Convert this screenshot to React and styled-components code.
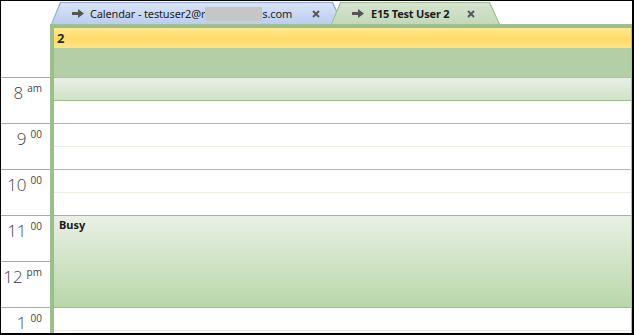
import React from "react";
import styled, { createGlobalStyle } from "styled-components";

const Global = createGlobalStyle`
  html, body { margin: 0; padding: 0; background: #fff; }
  body { font-family: "Noto Sans", "Liberation Sans", sans-serif; }
`;

const Window = styled.div`
  width: 634px;
  height: 335px;
  box-sizing: border-box;
  border: solid #000;
  border-width: 1px 2px 2px 1px;
  background: #fff;
  display: flex;
  flex-direction: column;
  overflow: hidden;
`;

const TabStrip = styled.div`
  height: 23px;
  flex: none;
  display: flex;
  align-items: flex-end;
  padding-left: 50px;
`;

const TabOuter = styled.div`
  position: relative;
  z-index: ${(p) => (p.$front ? 2 : 1)};
  height: 22px;
  width: ${(p) => p.$w}px;
  margin-left: ${(p) => p.$ml || 0}px;
  background: ${(p) => (p.$green ? "#9fbe91" : "#93a9d4")};
  clip-path: polygon(9px 0, calc(100% - 10px) 0, 100% 100%, 0 100%);
  padding: 1px 1px 0 1px;
  box-sizing: border-box;
`;

const TabInner = styled.div`
  height: 100%;
  background: ${(p) =>
    p.$green
      ? "linear-gradient(#d5e4cf, #c3d8b8)"
      : "linear-gradient(#d9e3f7, #bccdf0)"};
  clip-path: polygon(9px 0, calc(100% - 10px) 0, 100% 100%, 0 100%);
  display: flex;
  align-items: center;
  padding-left: ${(p) => p.$pl}px;
  box-sizing: border-box;
  font-size: 11px;
  color: #1e1e1e;
  white-space: nowrap;
`;

const TabLabel = styled.span`
  font-weight: ${(p) => (p.$bold ? 700 : 400)};
  margin-left: ${(p) => p.$ml}px;
  display: inline-flex;
  align-items: center;
  letter-spacing: ${(p) => (p.$bold ? "-0.2px" : "-0.15px")};
`;

const Redacted = styled.span`
  display: inline-block;
  width: 57px;
  height: 14px;
  background: #c6c6c6;
`;

const CloseBtn = styled.span`
  display: inline-flex;
  margin-left: ${(p) => p.$ml}px;
`;

const Body = styled.div`
  flex: 1;
  display: flex;
  min-height: 0;
`;

const TimeColumn = styled.div`
  width: 49px;
  flex: none;
  display: flex;
  flex-direction: column;
`;

const TimeSpacer = styled.div`
  height: 53px;
  flex: none;
`;

const TimeCell = styled.div`
  height: 46px;
  flex: none;
  box-sizing: border-box;
  border-top: 1px solid #a8a8b8;
  display: flex;
  justify-content: flex-end;
  align-items: flex-start;
  padding: 5px 8px 0 0;
  color: #444;
  font-family: "Open Sans", "Noto Sans", sans-serif;
`;

const HourNum = styled.span`
  font-size: 17px;
  font-weight: 300;
  line-height: 20px;
`;

const HourSup = styled.span`
  font-size: 10px;
  line-height: 10px;
  margin-left: 4px;
`;

const Frame = styled.div`
  flex: 1;
  display: flex;
  flex-direction: column;
  border-top: 3px solid #9dbe8d;
  border-left: 3px solid #9dbe8d;
  min-width: 0;
`;

const FrameInner = styled.div`
  flex: 1;
  display: flex;
  flex-direction: column;
  border-top: 1px solid #f0a12c;
  border-left: 1px solid #f0a12c;
  border-right: 1px solid #a9c79b;
  min-height: 0;
`;

const DayHeader = styled.div`
  height: 20px;
  flex: none;
  background: linear-gradient(#ffe98f, #ffdb68 55%, #ffe487);
  font-weight: 700;
  font-size: 13px;
  color: #2a2a2a;
  padding-left: 3px;
  display: flex;
  align-items: center;
`;

const AllDay = styled.div`
  height: 29px;
  flex: none;
  background: #b3cfa5;
`;

const Grid = styled.div`
  position: relative;
  flex: 1;
`;

const Slot = styled.div`
  height: 23px;
  box-sizing: border-box;
  border-top: 1px solid ${(p) => (p.$half ? "#ebeee0" : "#a9c69b")};
`;

const Appointment = styled.div`
  position: absolute;
  left: 0;
  right: 0;
  box-sizing: border-box;
  border-top: ${(p) => (p.$light ? "none" : "1px solid #9cbd8c")};
  border-bottom: 1px solid #9cbd8c;
  background: ${(p) =>
    p.$light
      ? "linear-gradient(#e9efe6, #cfe2c5)"
      : "linear-gradient(#e9f0e5, #b8d7a8)"};
  font-size: 11px;
  font-weight: 700;
  color: #1a1a1a;
  padding: 1px 5px;
`;

const Arrow = () => (
  <svg width="12" height="9" viewBox="0 0 12 9">
    <path d="M0 3h6V0l6 4.5L6 9V6H0z" fill="#555" />
  </svg>
);

const XIcon = () => (
  <svg width="8" height="8" viewBox="0 0 8 8">
    <path d="M1 1l6 6M7 1L1 7" stroke="#585858" strokeWidth="2" />
  </svg>
);

const hours = [
  ["8", "am"],
  ["9", "00"],
  ["10", "00"],
  ["11", "00"],
  ["12", "pm"],
  ["1", "00"],
];

export default function App() {
  return (
    <>
      <Global />
      <Window>
        <TabStrip>
          <TabOuter $w={292}>
            <TabInner $pl={20}>
              <Arrow />
              <TabLabel $ml={6}>
                Calendar - testuser2@r<Redacted />s.com
              </TabLabel>
              <CloseBtn $ml={20}>
                <XIcon />
              </CloseBtn>
            </TabInner>
          </TabOuter>
          <TabOuter $w={169} $ml={-12} $green $front>
            <TabInner $green $pl={20}>
              <Arrow />
              <TabLabel $bold $ml={7}>
                E15 Test User 2
              </TabLabel>
              <CloseBtn $ml={18}>
                <XIcon />
              </CloseBtn>
            </TabInner>
          </TabOuter>
        </TabStrip>
        <Body>
          <TimeColumn>
            <TimeSpacer />
            {hours.map(([h, s]) => (
              <TimeCell key={h}>
                <HourNum>{h}</HourNum>
                <HourSup>{s}</HourSup>
              </TimeCell>
            ))}
          </TimeColumn>
          <Frame>
            <FrameInner>
              <DayHeader>2</DayHeader>
              <AllDay />
              <Grid>
                {hours.map(([h]) => (
                  <React.Fragment key={h}>
                    <Slot />
                    <Slot $half />
                  </React.Fragment>
                ))}
                <Appointment $light style={{ top: 1, height: 23 }} />
                <Appointment style={{ top: 138, height: 93 }}>Busy</Appointment>
              </Grid>
            </FrameInner>
          </Frame>
        </Body>
      </Window>
    </>
  );
}
